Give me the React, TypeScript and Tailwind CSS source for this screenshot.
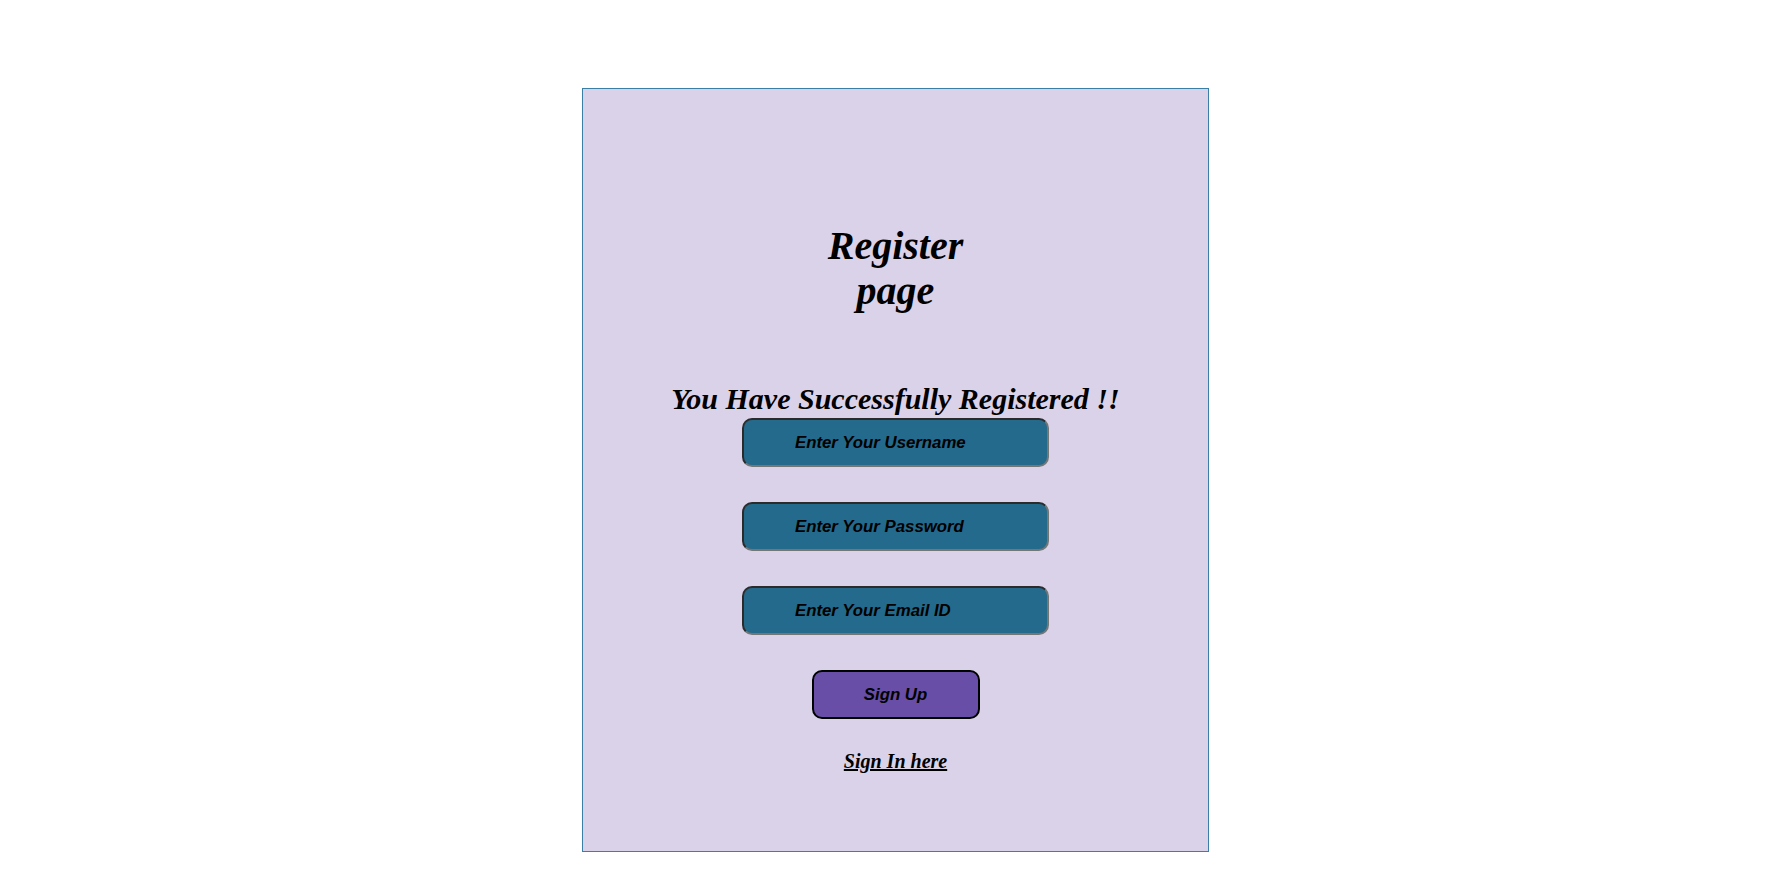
import React from "react";

const fieldClass =
  "w-[307px] h-[49px] rounded-[10px] border-2 border-t-[#2b2b2b] border-l-[#2b2b2b] border-b-[#767676] border-r-[#767676] bg-[#236a8c] pl-[51px] text-[16.8px] font-bold italic text-black placeholder:text-black outline-none font-['Liberation_Sans',Arial,sans-serif]";

export default function App() {
  return (
    <div className="min-h-screen w-full bg-white pt-[88px] pb-[35px]">
      <div className="ml-[582px] w-[627px] h-[764px] border border-[#3b7ea6] bg-[#dad2e9] flex flex-col items-center font-['Liberation_Serif','Times_New_Roman',serif]">
        <h1 className="mt-[134px] w-[180px] text-center text-[40px] leading-[45px] font-bold italic text-black">
          Register page
        </h1>

        <h2 className="mt-[69px] mb-[2px] text-[30px] leading-[normal] font-bold italic text-black">
          You Have Successfully Registered !!
        </h2>

        <form className="flex flex-col items-center gap-[35px]" onSubmit={(e) => e.preventDefault()}>
          <input type="text" placeholder="Enter Your Username" className={fieldClass} />
          <input type="password" placeholder="Enter Your Password" className={fieldClass} />
          <input type="email" placeholder="Enter Your Email ID" className={fieldClass} />
          <button
            type="submit"
            className="w-[168px] h-[49px] rounded-[10px] border-2 border-black bg-[#684ea6] text-[16.8px] font-bold italic text-black font-['Liberation_Sans',Arial,sans-serif]"
          >
            Sign Up
          </button>
        </form>

        <a href="#" className="mt-[31px] text-[20px] leading-[normal] font-bold italic text-black underline">
          Sign In here
        </a>
      </div>
    </div>
  );
}
